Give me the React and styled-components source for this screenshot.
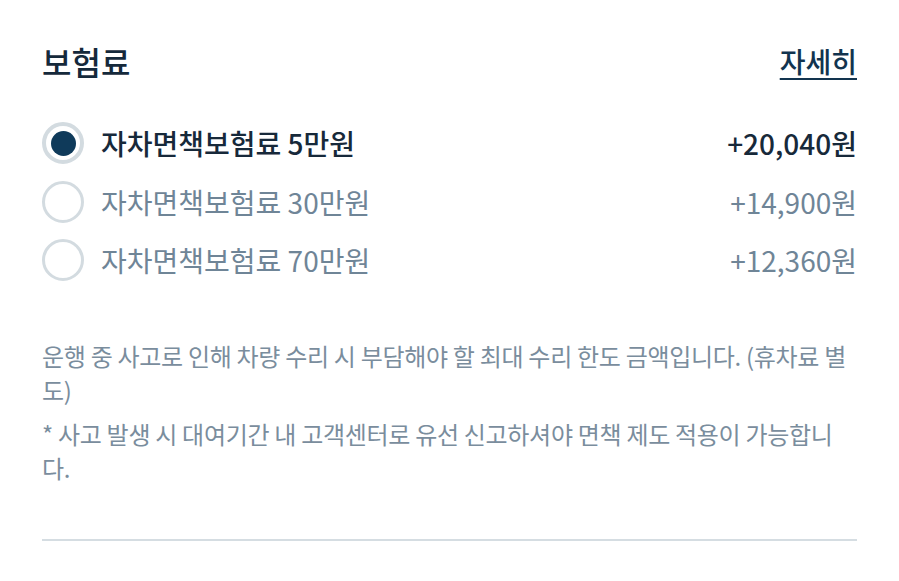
import React from "react";
import styled, { createGlobalStyle } from "styled-components";

const Global = createGlobalStyle`
  html, body { margin: 0; padding: 0; background: #fff; }
  body { font-family: "Noto Sans CJK KR", "Noto Sans", sans-serif; }
`;

const Page = styled.div`
  width: 899px;
  box-sizing: border-box;
  padding: 38px 42px 0;
`;

const Header = styled.div`
  display: flex;
  justify-content: space-between;
  align-items: center;
  height: 46px;
`;

const Title = styled.h2`
  margin: 0;
  font-size: 32px;
  font-weight: 500;
  color: #15293b;
`;

const MoreLink = styled.a`
  font-size: 28px;
  font-weight: 500;
  color: #12344f;
  text-decoration: underline;
  text-underline-offset: 5px;
  text-decoration-thickness: 2px;
  cursor: pointer;
`;

const Options = styled.div`
  display: flex;
  flex-direction: column;
  gap: 16.5px;
  margin-top: 38px;
`;

const Row = styled.label`
  display: flex;
  align-items: center;
  height: 42px;
  cursor: pointer;
`;

const Radio = styled.span`
  flex: none;
  width: 42px;
  height: 42px;
  box-sizing: border-box;
  border-radius: 50%;
  border: ${(p) => (p.$checked ? "4px" : "3px")} solid #d3dbe0;
  display: flex;
  align-items: center;
  justify-content: center;
  &::after {
    content: "";
    display: ${(p) => (p.$checked ? "block" : "none")};
    width: 25px;
    height: 25px;
    border-radius: 50%;
    background: #0f3a5a;
  }
`;

const Label = styled.span`
  flex: 1;
  margin-left: 17px;
  font-size: 28px;
  font-weight: ${(p) => (p.$checked ? 500 : 400)};
  color: ${(p) => (p.$checked ? "#17293a" : "#6f8597")};
`;

const Price = styled.span`
  font-size: 28px;
  font-weight: ${(p) => (p.$checked ? 500 : 400)};
  color: ${(p) => (p.$checked ? "#17293a" : "#6f8597")};
`;

const Notes = styled.div`
  margin-top: 58px;
  display: flex;
  flex-direction: column;
  gap: 10px;
`;

const Note = styled.p`
  margin: 0;
  font-size: 24px;
  line-height: 34px;
  color: #7a8d9d;
  letter-spacing: -0.3px;
`;

const Divider = styled.hr`
  margin: 54px 0 0;
  border: none;
  height: 2px;
  background: #d5dde2;
`;

const options = [
  { label: "자차면책보험료 5만원", price: "+20,040원", checked: true },
  { label: "자차면책보험료 30만원", price: "+14,900원", checked: false },
  { label: "자차면책보험료 70만원", price: "+12,360원", checked: false },
];

export default function App() {
  return (
    <>
      <Global />
      <Page>
        <Header>
          <Title>보험료</Title>
          <MoreLink>자세히</MoreLink>
        </Header>
        <Options>
          {options.map((o) => (
            <Row key={o.label}>
              <Radio $checked={o.checked} />
              <Label $checked={o.checked}>{o.label}</Label>
              <Price $checked={o.checked}>{o.price}</Price>
            </Row>
          ))}
        </Options>
        <Notes>
          <Note>
            운행 중 사고로 인해 차량 수리 시 부담해야 할 최대 수리 한도 금액입니다. (휴차료 별도)
          </Note>
          <Note>
            * 사고 발생 시 대여기간 내 고객센터로 유선 신고하셔야 면책 제도 적용이 가능합니다.
          </Note>
        </Notes>
        <Divider />
      </Page>
    </>
  );
}
